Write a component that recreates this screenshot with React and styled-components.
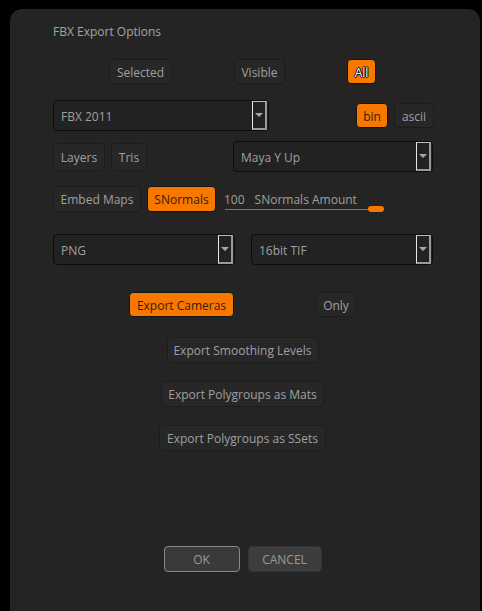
import React from "react";
import styled, { createGlobalStyle } from "styled-components";

const Global = createGlobalStyle`
  html, body { margin: 0; padding: 0; background: #000; }
  body { font-family: "Open Sans", "Liberation Sans", sans-serif; }
`;

const Panel = styled.div`
  margin: 9px 0 0 10px;
  width: 470px;
  height: 602px;
  box-sizing: border-box;
  background: #242424;
  border-radius: 12px 12px 0 0;
  padding: 0 0 0 43px;
  display: flex;
  flex-direction: column;
`;

const Content = styled.div`
  width: 379px;
  display: flex;
  flex-direction: column;
`;

const Title = styled.div`
  margin-top: 14px;
  height: 18px;
  line-height: 18px;
  font-size: 12px;
  color: #a4a4a4;
`;

const Row = styled.div`
  display: flex;
  align-items: center;
  margin-top: ${(p) => p.$mt}px;
  height: ${(p) => p.$h}px;
  justify-content: ${(p) => (p.$center ? "center" : "flex-start")};
`;

const Btn = styled.div`
  box-sizing: border-box;
  height: ${(p) => p.$h || 25}px;
  width: ${(p) => p.$w}px;
  margin-left: ${(p) => p.$ml || 0}px;
  flex: none;
  display: flex;
  align-items: center;
  justify-content: center;
  padding-top: 1px;
  font-size: 12px;
  border-radius: 4px;
  border: 1px solid ${(p) => (p.$on ? "#141414" : "#1c1c1c")};
  background: ${(p) => (p.$on ? "#f77800" : "#272727")};
  color: ${(p) => (p.$on ? "#3a1c00" : "#a0a0a0")};
  ${(p) =>
    p.$white
      ? "color: #fff; text-shadow: 1px 0 0 #000, -1px 0 0 #000, 0 1px 0 #000, 0 -1px 0 #000;"
      : ""}
`;

const Select = styled.div`
  box-sizing: border-box;
  width: ${(p) => p.$w}px;
  height: 31px;
  margin-left: ${(p) => p.$ml || 0}px;
  flex: none;
  display: flex;
  align-items: stretch;
  border: 1px solid #0c0c0c;
  border-radius: 4px;
  background: #222;
  padding-right: 1px;
`;

const SelectLabel = styled.div`
  flex: 1;
  display: flex;
  align-items: center;
  padding: 2px 0 0 7px;
  font-size: 12px;
  color: #a0a0a0;
`;

const Arrow = styled.div`
  box-sizing: border-box;
  width: 15px;
  border-left: 1px solid #e6e6e6;
  border-top: 1px solid #bdbdbd;
  border-right: 2px solid #9a9a9a;
  border-bottom: 2px solid #9a9a9a;
  display: flex;
  align-items: center;
  justify-content: center;
  &::after {
    content: "";
    width: 0;
    height: 0;
    border-left: 4px solid transparent;
    border-right: 4px solid transparent;
    border-top: 4px solid #a8a8a8;
  }
`;

const Slider = styled.div`
  margin-left: 8px;
  width: 162px;
  height: 26px;
  position: relative;
  font-size: 12px;
  color: #a0a0a0;
  display: flex;
  align-items: flex-start;
  gap: 10px;
  padding-top: 5px;
  box-sizing: border-box;
`;

const Track = styled.div`
  position: absolute;
  left: 1px;
  top: 23px;
  width: 148px;
  height: 1px;
  background: #7a7a7a;
`;

const Knob = styled.div`
  position: absolute;
  left: 144px;
  top: 20px;
  width: 16px;
  height: 6px;
  border-radius: 3px;
  background: #f77800;
`;

const Dropdown = ({ w, ml, children }) => (
  <Select $w={w} $ml={ml}>
    <SelectLabel>{children}</SelectLabel>
    <Arrow />
  </Select>
);

const Footer = styled.div`
  margin-top: 95px;
  display: flex;
  justify-content: center;
  gap: 8px;
`;

const FootBtn = styled.div`
  box-sizing: border-box;
  width: ${(p) => p.$w}px;
  height: 26px;
  display: flex;
  align-items: center;
  justify-content: center;
  padding-top: 1px;
  border-radius: 4px;
  font-size: 12px;
  color: #9a9a9a;
  background: ${(p) => (p.$primary ? "#3a3a3a" : "#3d3d3d")};
  border: 1px solid ${(p) => (p.$primary ? "#8a8a8a" : "#333")};
`;

export default function App() {
  return (
    <>
      <Global />
      <Panel>
        <Content>
          <Title>FBX Export Options</Title>
          <Row $mt={18} $h={25}>
            <Btn $w={63} $ml={56}>Selected</Btn>
            <Btn $w={51} $ml={62}>Visible</Btn>
            <Btn $w={29} $ml={62} $on $white>All</Btn>
          </Row>
          <Row $mt={16} $h={31}>
            <Dropdown w={216}>FBX 2011</Dropdown>
            <Btn $w={32} $ml={87} $h={25} $on>bin</Btn>
            <Btn $w={40} $ml={6} $h={25}>ascii</Btn>
          </Row>
          <Row $mt={10} $h={31}>
            <Btn $w={52} $h={28}>Layers</Btn>
            <Btn $w={36} $ml={6} $h={28}>Tris</Btn>
            <Dropdown w={200} ml={86}>Maya Y Up</Dropdown>
          </Row>
          <Row $mt={14} $h={26}>
            <Btn $w={88} $h={26}>Embed Maps</Btn>
            <Btn $w={69} $ml={6} $h={26} $on>SNormals</Btn>
            <Slider>
              <span>100</span>
              <span>SNormals Amount</span>
              <Track />
              <Knob />
            </Slider>
          </Row>
          <Row $mt={22} $h={31}>
            <Dropdown w={182}>PNG</Dropdown>
            <Dropdown w={182} ml={16}>16bit TIF</Dropdown>
          </Row>
          <Row $mt={27} $h={25}>
            <Btn $w={105} $ml={76} $on>Export Cameras</Btn>
            <Btn $w={40} $ml={82}>Only</Btn>
          </Row>
          <Row $mt={20} $h={26} $center>
            <Btn $w={152} $h={26}>Export Smoothing Levels</Btn>
          </Row>
          <Row $mt={18} $h={26} $center>
            <Btn $w={163} $h={26}>Export Polygroups as Mats</Btn>
          </Row>
          <Row $mt={18} $h={26} $center>
            <Btn $w={167} $h={26}>Export Polygroups as SSets</Btn>
          </Row>
          <Footer>
            <FootBtn $w={76} $primary>OK</FootBtn>
            <FootBtn $w={74}>CANCEL</FootBtn>
          </Footer>
        </Content>
      </Panel>
    </>
  );
}
